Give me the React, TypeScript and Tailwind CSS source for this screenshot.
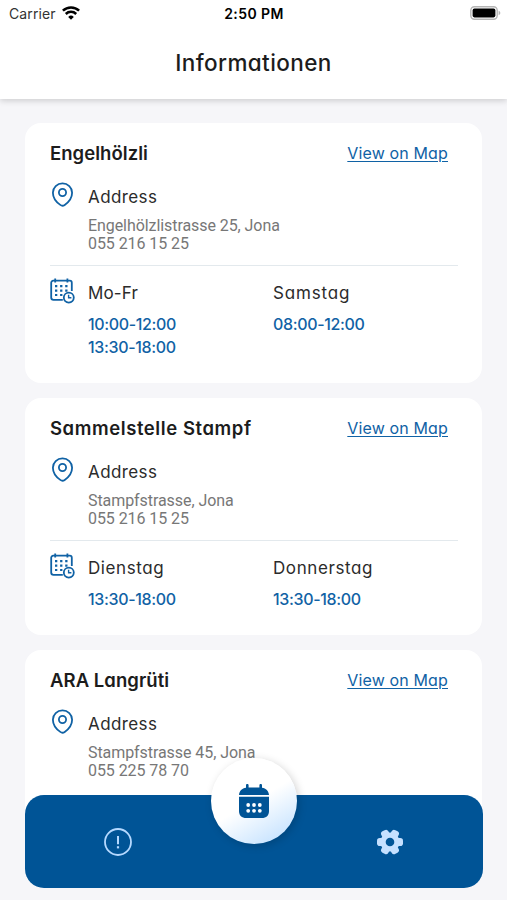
import clsx from 'clsx';

type Slot = { day: string; daySpacing: string; times: string[] };

type Place = {
  name: string;
  nameSpacing: string;
  street: string;
  phone: string;
  slots: Slot[];
};

const PLACES: Place[] = [
  {
    name: 'Engelhölzli',
    nameSpacing: 'tracking-[0.05px]',
    street: 'Engelhölzlistrasse 25, Jona',
    phone: '055 216 15 25',
    slots: [
      { day: 'Mo-Fr', daySpacing: 'tracking-[0.15px]', times: ['10:00-12:00', '13:30-18:00'] },
      { day: 'Samstag', daySpacing: 'tracking-[0.85px]', times: ['08:00-12:00'] },
    ],
  },
  {
    name: 'Sammelstelle Stampf',
    nameSpacing: 'tracking-[0.58px]',
    street: 'Stampfstrasse, Jona',
    phone: '055 216 15 25',
    slots: [
      { day: 'Dienstag', daySpacing: 'tracking-[0.6px]', times: ['13:30-18:00'] },
      { day: 'Donnerstag', daySpacing: 'tracking-[0.6px]', times: ['13:30-18:00'] },
    ],
  },
  {
    name: 'ARA Langrüti',
    nameSpacing: 'tracking-[0.05px]',
    street: 'Stampfstrasse 45, Jona',
    phone: '055 225 78 70',
    slots: [
      { day: 'Mo-Fr', daySpacing: 'tracking-[0.15px]', times: ['08:00-12:00'] },
    ],
  },
];

function WifiIcon() {
  return (
    <svg width="18" height="14" viewBox="0 0 18 14" fill="none" stroke="#000" strokeWidth="2.5">
      <path d="M0.9 4.7a11.6 11.6 0 0 1 16.2 0" />
      <path d="M3.8 8a7.4 7.4 0 0 1 10.4 0" />
      <path d="M9 13.7 6.2 10.9a4 4 0 0 1 5.6 0Z" fill="#000" stroke="none" />
    </svg>
  );
}

function BatteryIcon() {
  return (
    <svg width="31" height="14" viewBox="0 0 31 14">
      <rect x="0.8" y="0.8" width="26.4" height="12.4" rx="3.6" fill="#fff" stroke="#b5b5b5" strokeWidth="1.4" />
      <rect x="2.6" y="2.6" width="22.8" height="8.8" rx="1.8" fill="#000" />
      <path d="M28.6 4.8c1.1.4 1.7 1.2 1.7 2.2s-.6 1.8-1.7 2.2Z" fill="#b5b5b5" />
    </svg>
  );
}

function PinIcon() {
  return (
    <svg width="24" height="26" viewBox="0 0 24 26" fill="none" stroke="#1062a5" strokeWidth="1.8">
      <path d="M12.5 1.4c5.3 0 9.6 4.1 9.6 9.3 0 4.6-3.3 9.3-7.4 12.2a3.7 3.7 0 0 1-4.4 0C6.200 20 2.9 15.300 2.9 10.700 2.9 5.500 7.200 1.400 12.500 1.400Z" />
      <circle cx="12.5" cy="10.5" r="3.6" />
    </svg>
  );
}

function ScheduleIcon() {
  return (
    <svg width="26" height="27" viewBox="0 0 26 27" fill="none" stroke="#1062a5" strokeWidth="1.8">
      <path d="M12.8 21.8H3.5a2.300 2.300 0 0 1-2.300-2.300V4.700a2 2 0 0 1 2-2h16.600a2 2 0 0 1 2 2V13" />
      <path d="M5.200 0.400v4.200M17.400 0.400v4.200" />
      <path d="M5 8.200h12.600M5 12.600h12.600M5 17h7.400" strokeWidth="2.200" strokeDasharray="2.300 2.800" />
      <circle cx="18.800" cy="19.600" r="5" fill="#fff" />
      <path d="M18.600 16.800v3h2.800" strokeWidth="1.400" />
    </svg>
  );
}

function CalendarIcon() {
  return (
    <svg width="30" height="35" viewBox="0 0 30 35" fill="#005496">
      <path d="M7 1.2a1.3 1.3 0 0 1 2.6 0v2.400h10.800V1.200a1.300 1.300 0 0 1 2.600 0v2.500c4 .4 6.700 3.200 7 7.300H0c.3-4.100 3-6.900 7-7.300Z" />
      <path d="M0 12.800h30V27c0 4.400-2.700 7-7.200 7H7.200C2.700 34 0 31.400 0 27Z" />
      <g fill="#fff">
        <circle cx="9.2" cy="21" r="1.9" />
        <circle cx="15" cy="21" r="1.9" />
        <circle cx="20.8" cy="21" r="1.9" />
        <circle cx="9.2" cy="26.8" r="1.9" />
        <circle cx="15" cy="26.8" r="1.9" />
        <circle cx="20.8" cy="26.8" r="1.9" />
      </g>
    </svg>
  );
}

function AlertIcon() {
  return (
    <svg width="28" height="28" viewBox="0 0 28 28" fill="none" stroke="#b5d9ff" strokeWidth="1.8">
      <circle cx="14" cy="14" r="13" />
      <path d="M14 8v8.2" strokeWidth="2" />
      <path d="M14 18.2v2.2" strokeWidth="2.2" />
    </svg>
  );
}

function GearIcon() {
  return (
    <svg width="28" height="28" viewBox="-14 -14 28 28">
      <g fill="#c5e0ff">
        {[0, 60, 120].map((angle) => (
          <rect key={angle} x="-13" y="-4" width="26" height="8" rx="2.8" transform={`rotate(${angle})`} />
        ))}
        <circle r="9.6" />
      </g>
      <circle r="4.3" fill="#005496" />
    </svg>
  );
}

function PlaceCard({ place }: { place: Place }) {
  return (
    <section className="group rounded-2xl bg-white pt-[17px] pr-6 pb-6 pl-[25px]">
      <div className="flex h-[25px] items-center justify-between pr-[10px]">
        <h2 className={clsx('text-[18.5px] leading-6 font-semibold text-[#1c1c1c]', place.nameSpacing)}>
          {place.name}
        </h2>
        <a className="text-[16px] leading-6 tracking-[0.14px] text-[#1062a5] underline decoration-1 underline-offset-2">
          View on Map
        </a>
      </div>

      {/* Address */}
      <div className="mt-5 flex h-[81px] border-b border-[#e3e9ed] group-last:border-transparent">
        <div className="-mt-[3px] w-[38px] shrink-0">
          <PinIcon />
        </div>
        <div>
          <div className="text-[17px] leading-6 tracking-[0.4px] text-[#2b2b2b]">Address</div>
          <div className="mt-2 font-[Roboto,sans-serif] text-[16px] leading-[18px] tracking-[-0.07px] text-[#777]">
            <div>{place.street}</div>
            <div>{place.phone}</div>
          </div>
        </div>
      </div>

      {/* Opening hours */}
      <div className="mt-[15px] flex">
        <div className="-mt-[3px] h-6 w-[38px] shrink-0">
          <ScheduleIcon />
        </div>
        {place.slots.map((slot) => (
          <div key={slot.day} className="w-[185px] shrink-0">
            <div className={clsx('text-[17px] leading-6 text-[#2b2b2b]', slot.daySpacing)}>{slot.day}</div>
            <div className="mt-2 text-[16px] leading-[23px] font-medium tracking-[-0.35px] text-[#1062a5]">
              {slot.times.map((time) => (
                <div key={time}>{time}</div>
              ))}
            </div>
          </div>
        ))}
      </div>
    </section>
  );
}

export default function App() {
  return (
    <div className="relative flex h-[900px] w-[507px] flex-col overflow-hidden bg-[#f6f6f9] font-[Inter,sans-serif] [font-feature-settings:'cv11']">
      <header className="relative z-10 h-[99px] shrink-0 bg-white shadow-[0_2px_6px_rgba(0,0,0,0.16)]">
        <div className="grid h-[26px] grid-cols-3 items-center pr-[6px] pl-[9px] text-[14px] text-black">
          <div className="flex items-center gap-[6px] [font-feature-settings:normal]">
            <span className="tracking-[0.1px] text-[#333]">Carrier</span>
            <WifiIcon />
          </div>
          <div className="pr-[2px] text-center font-semibold tracking-[0.4px] [font-feature-settings:normal]">
            2:50 PM
          </div>
          <div className="flex justify-end">
            <BatteryIcon />
          </div>
        </div>
        <h1 className="mt-[21px] text-center text-[22.5px] leading-8 font-medium tracking-[0.4px] text-[#1c1c1c]">
          Informationen
        </h1>
      </header>

      <main className="flex flex-col gap-[15px] pt-6 pr-[25px] pl-[25px]">
        {PLACES.map((place) => (
          <PlaceCard key={place.name} place={place} />
        ))}
      </main>

      {/* Floating tab bar */}
      <nav className="absolute top-[795px] left-[25px] flex h-[93px] w-[458px] items-center justify-between rounded-[19px] bg-[#005496] pr-[79px] pl-[79px]">
        <AlertIcon />
        <GearIcon />
        <div className="absolute -top-[37px] left-[186px] flex size-[86px] items-center justify-center rounded-full bg-linear-150 from-white from-50% to-[#b9dcff] shadow-[2px_2px_8px_rgba(0,0,0,0.18)]">
          <CalendarIcon />
        </div>
      </nav>
    </div>
  );
}
